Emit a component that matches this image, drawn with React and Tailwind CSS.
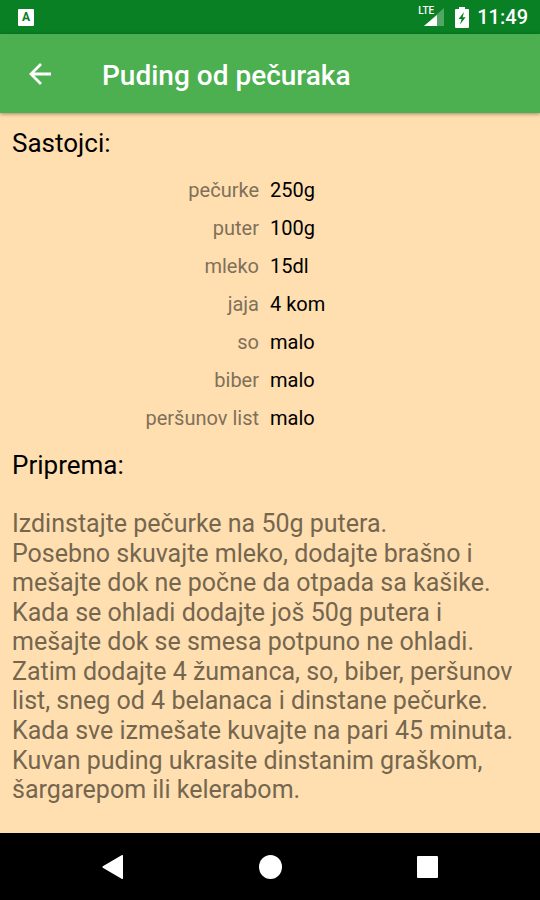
const ingredients = [
  { name: "pečurke", amount: "250g" },
  { name: "puter", amount: "100g" },
  { name: "mleko", amount: "15dl" },
  { name: "jaja", amount: "4 kom" },
  { name: "so", amount: "malo" },
  { name: "biber", amount: "malo" },
  { name: "peršunov list", amount: "malo" },
];

const steps = [
  "Izdinstajte pečurke na 50g putera.",
  "Posebno skuvajte mleko, dodajte brašno i mešajte dok ne počne da otpada sa kašike.",
  "Kada se ohladi dodajte još 50g putera i mešajte dok se smesa potpuno ne ohladi.",
  "Zatim dodajte 4 žumanca, so, biber, peršunov list, sneg od 4 belanaca i dinstane pečurke.",
  "Kada sve izmešate kuvajte na pari 45 minuta.",
  "Kuvan puding ukrasite dinstanim graškom, šargarepom ili kelerabom.",
];

function StatusBar() {
  return (
    <div className="flex h-[34px] items-center justify-between bg-[#088023] pl-[18px] pr-3 text-white">
      <span className="flex h-[17px] w-4 items-center justify-center rounded-[1px] bg-white text-[12px] font-bold leading-4 text-[#088023]">
        A
      </span>

      <div className="flex items-center">
        <div className="flex items-center gap-[10px]">
          <div className="relative">
            <svg className="h-[22px] w-[27px]" viewBox="0 0 27 22" aria-hidden="true">
              <path d="M26 2V20H6z" fill="#fff" fillOpacity="0.3" />
              <path d="M19 9V20H6z" fill="#fff" />
            </svg>
            <span className="absolute left-0 top-0 text-[10px] font-medium leading-[10px]">LTE</span>
          </div>
          <svg className="h-[21px] w-[14px]" viewBox="0 0 14 21" aria-label="Baterija">
            <path d="M4 0H10V2H13Q14 2 14 3V20Q14 21 13 21H1Q0 21 0 20V3Q0 2 1 2H4z" fill="#fff" />
            <path d="M9 5L3.6 12H6.6L5 17.5L10.6 10.2H7.6z" fill="#088023" />
          </svg>
        </div>
        <span className="ml-2 text-[20px] font-medium leading-6">11:49</span>
      </div>
    </div>
  );
}

function AppBar() {
  return (
    <header className="relative flex h-[79px] items-center bg-[#4caf50] pl-7 text-white shadow-[0_1px_4px_rgba(0,0,0,0.4)]">
      <button type="button" aria-label="Nazad" className="cursor-pointer">
        <svg className="h-6 w-6" viewBox="0 0 24 24" fill="none" stroke="currentColor" strokeWidth="2.8">
          <path d="M23 12H3M13 2L3 12L13 22" />
        </svg>
      </button>
      <h1 className="ml-[50px] pt-1 text-[28px] font-medium leading-8">Puding od pečuraka</h1>
    </header>
  );
}

function NavBar() {
  return (
    <nav className="flex h-[67px] items-center justify-center bg-black text-white">
      <button type="button" aria-label="Nazad" className="flex w-[157px] cursor-pointer justify-center">
        <svg className="h-6 w-[22px]" viewBox="0 0 22 24" fill="currentColor">
          <path d="M20 0Q21 -0.3 21 1V23Q21 24.3 20 24L0.8 12.8Q0 12 0.8 11.2z" />
        </svg>
      </button>
      <button type="button" aria-label="Početna" className="flex w-[157px] cursor-pointer justify-center">
        <span className="h-6 w-[23px] rounded-[50%] bg-white" />
      </button>
      <button type="button" aria-label="Nedavno" className="flex w-[157px] cursor-pointer justify-center">
        <span className="h-[22px] w-[21px] rounded-[1px] bg-white" />
      </button>
    </nav>
  );
}

export default function App() {
  return (
    <div className="flex min-h-screen flex-col bg-[#ffdfb0] font-['Roboto',sans-serif]">
      <StatusBar />
      <AppBar />

      <main className="flex-1 px-3 pt-[14px]">
        <h2 className="text-[26px] leading-8 text-black">Sastojci:</h2>

        <table className="mt-3 w-full table-fixed text-[20px] leading-6">
          <tbody>
            {ingredients.map((item) => (
              <tr key={item.name} className="h-[38px]">
                <th scope="row" className="pr-[11px] text-right font-normal text-[#80705a]">
                  {item.name}
                </th>
                <td className="text-black">{item.amount}</td>
              </tr>
            ))}
          </tbody>
        </table>

        <h2 className="mt-3 text-[26px] leading-8 text-black">Priprema:</h2>

        <div className="mt-7 flex flex-col gap-px text-[25px] leading-[29px] text-[#75664f]">
          {steps.map((step) => (
            <p key={step}>{step}</p>
          ))}
        </div>
      </main>

      <NavBar />
    </div>
  );
}
